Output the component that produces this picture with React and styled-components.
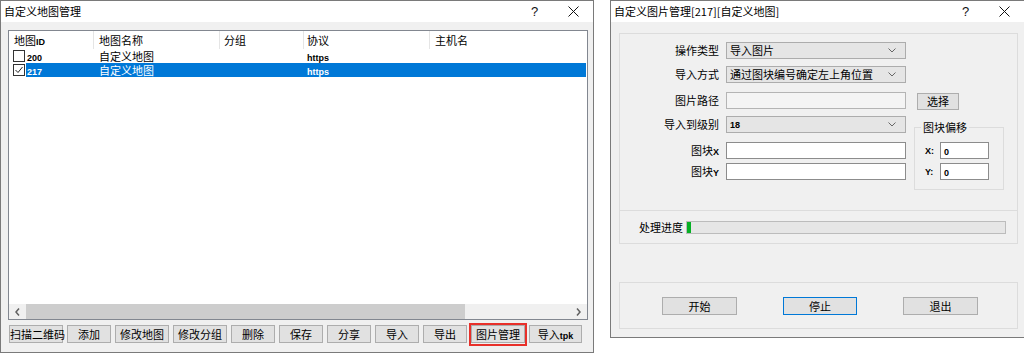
import React from "react";
import styled, { createGlobalStyle } from "styled-components";

const GlobalStyle = createGlobalStyle`
  html, body { margin: 0; padding: 0; background: #fff; }
  body {
    font-family: "Noto Sans CJK SC", "Noto Sans", sans-serif;
    font-size: 11px;
    color: #000;
  }
`;

const Desktop = styled.div`
  display: flex;
  align-items: flex-start;
  gap: 16px;
  width: 1024px;
  height: 354px;
  overflow: hidden;
  background: #fff;
`;

const Window = styled.div`
  flex: none;
  width: ${p => p.$w}px;
  height: ${p => p.$h}px;
  box-sizing: border-box;
  border: 1px solid #7a7a7a;
  background: #f0f0f0;
  display: flex;
  flex-direction: column;
`;

const TitleBar = styled.div`
  height: 21px;
  flex: none;
  background: #fff;
  display: flex;
  align-items: center;
  padding-left: 3px;
`;

const TitleText = styled.div`
  flex: 1;
  font-size: 11px;
  line-height: 21px;
  white-space: nowrap;
`;

const TitleButton = styled.div`
  width: 39px;
  height: 21px;
  display: flex;
  align-items: center;
  justify-content: center;
  font-family: "Liberation Sans", sans-serif;
  font-size: 13px;
  color: #111;
`;

const Latin = styled.span`
  font-family: "Liberation Sans", Arial, sans-serif;
  font-size: 9px;
  font-weight: ${p => (p.$thin ? "normal" : "bold")};
`;

/* ---------- left window ---------- */

const LeftBody = styled.div`
  flex: 1;
  padding: 8px 5px 0 7px;
  display: flex;
  flex-direction: column;
`;

const ListBox = styled.div`
  width: 580px;
  height: 290px;
  box-sizing: border-box;
  border: 1px solid #828790;
  background: #fff;
  display: flex;
  flex-direction: column;
`;

const Header = styled.div`
  height: 18px;
  flex: none;
  display: flex;
`;

const HeadCell = styled.div`
  box-sizing: border-box;
  width: ${p => (p.$w ? `${p.$w}px` : "auto")};
  flex: ${p => (p.$w ? "none" : "1")};
  padding-left: ${p => p.$pl}px;
  border-right: ${p => (p.$w ? "1px solid #e5e5e5" : "none")};
  line-height: 18px;
  white-space: nowrap;
`;

const Row = styled.div`
  height: 14px;
  flex: none;
  display: flex;
`;

const CheckCell = styled.div`
  width: 17px;
  flex: none;
  display: flex;
  align-items: center;
  padding-left: 4px;
  box-sizing: border-box;
`;

const CheckBox = styled.div`
  width: 12px;
  height: 12px;
  box-sizing: border-box;
  border: 1px solid #333;
  background: #fff;
  display: flex;
`;

const Line = styled.div`
  flex: 1;
  margin-right: 1px;
  display: flex;
  background: ${p => (p.$selected ? "#0078d7" : "transparent")};
  color: ${p => (p.$selected ? "#fff" : "#000")};
`;

const Cell = styled.div`
  box-sizing: border-box;
  width: ${p => (p.$w ? `${p.$w}px` : "auto")};
  flex: ${p => (p.$w ? "none" : "1")};
  padding-left: ${p => p.$pl}px;
  line-height: 14px;
  white-space: nowrap;
`;

const Filler = styled.div`
  flex: 1;
`;

const HScroll = styled.div`
  height: 15px;
  flex: none;
  display: flex;
  background: #f0f0f0;
`;

const ScrollArrow = styled.div`
  width: 17px;
  flex: none;
  display: flex;
  align-items: center;
  justify-content: center;
`;

const ScrollThumb = styled.div`
  width: ${p => p.$w}px;
  flex: none;
  background: #cdcdcd;
`;

const ButtonRow = styled.div`
  display: flex;
  gap: 4px;
  margin-top: 5px;
  padding-left: 1px;
`;

const Btn = styled.div`
  position: relative;
  width: ${p => p.$w}px;
  height: ${p => p.$h || 18}px;
  flex: none;
  box-sizing: border-box;
  border: 1px solid ${p => (p.$focus ? "#0078d7" : "#adadad")};
  background: #e1e1e1;
  font-size: 11px;
  line-height: ${p => (p.$h || 18) - 2}px;
  text-align: center;
  white-space: nowrap;
  ${p =>
    p.$marked &&
    `
    &::after {
      content: "";
      position: absolute;
      left: -3px;
      top: -3px;
      right: -3px;
      bottom: -4px;
      border: 2px solid #e8302a;
    }
  `}
`;

/* ---------- right window ---------- */

const RightBody = styled.div`
  flex: 1;
  padding: 11px 0 0 8px;
  display: flex;
  flex-direction: column;
`;

const GroupBox = styled.div`
  width: 399px;
  height: ${p => p.$h}px;
  flex: none;
  box-sizing: border-box;
  border: 1px solid #dcdcdc;
  border-top-width: ${p => (p.$joined ? 0 : 1)}px;
  margin-top: ${p => p.$mt || 0}px;
`;

const FormGrid = styled.div`
  display: grid;
  grid-template-columns: 106px 180px 1fr;
  grid-template-rows: 24px 26px 24px 26px 21px 18px;
  padding-top: 8px;
`;

const Label = styled.div`
  grid-column: 1;
  text-align: right;
  padding-right: 7px;
  line-height: 17px;
  white-space: nowrap;
`;

const Combo = styled.div`
  height: 17px;
  box-sizing: border-box;
  border: 1px solid #acacac;
  background: #e5e5e5;
  display: flex;
  align-items: center;
  padding: 0 9px 0 3px;
`;

const ComboText = styled.div`
  flex: 1;
  line-height: 15px;
  white-space: nowrap;
`;

const Field = styled.div`
  height: 17px;
  box-sizing: border-box;
  border: 1px solid ${p => (p.$disabled ? "#b4b4b4" : "#8c8c8c")};
  background: ${p => (p.$disabled ? "#f4f4f4" : "#fff")};
  width: ${p => (p.$w ? `${p.$w}px` : "auto")};
  padding-left: 3px;
  line-height: 15px;
`;

const SideButton = styled(Btn)`
  margin-left: 11px;
  margin-top: 1px;
`;

const OffsetSet = styled.fieldset`
  grid-column: 3;
  grid-row: 4 / span 3;
  align-self: start;
  margin: 4px 0 0 8px;
  width: 90px;
  height: 70px;
  box-sizing: border-box;
  padding: 0 0 0 10px;
  border: 1px solid #dcdcdc;
  min-width: 0;
`;

const OffsetLegend = styled.legend`
  font-size: 11px;
  line-height: 14px;
  padding: 0 2px;
  margin-left: -4px;
`;

const OffsetRow = styled.div`
  display: flex;
  align-items: center;
  margin-top: ${p => p.$mt}px;
`;

const OffsetLabel = styled(Latin)`
  width: 15px;
`;

const ProgressRow = styled.div`
  height: 100%;
  display: flex;
  align-items: center;
  padding-left: 19px;
`;

const ProgressLabel = styled.div`
  width: 47px;
  white-space: nowrap;
`;

const ProgressBar = styled.div`
  width: 320px;
  height: 13px;
  box-sizing: border-box;
  border: 1px solid #bcbcbc;
  background: #e6e6e6;
  display: flex;
`;

const ProgressChunk = styled.div`
  width: ${p => p.$w}px;
  background: #06b025;
`;

const ActionRow = styled.div`
  height: 100%;
  display: flex;
  align-items: center;
  gap: 46px;
  padding-left: 42px;
`;

/* ---------- icons ---------- */

const CloseIcon = () => (
  <svg width="11" height="11" viewBox="0 0 11 11">
    <path d="M0.5 0.5 L10.5 10.5 M10.5 0.5 L0.5 10.5" stroke="#111" strokeWidth="1" fill="none" />
  </svg>
);

const Check = () => (
  <svg width="10" height="10" viewBox="0 0 10 10">
    <path d="M1.5 5 L4 7.5 L8.5 2" stroke="#222" strokeWidth="1" fill="none" />
  </svg>
);

const Chevron = () => (
  <svg width="8" height="5" viewBox="0 0 8 5">
    <path d="M0.5 0.5 L4 4 L7.5 0.5" stroke="#666" strokeWidth="1" fill="none" />
  </svg>
);

const ArrowGlyph = ({ dir }) => (
  <svg width="5" height="8" viewBox="0 0 5 8">
    <path
      d={dir === "left" ? "M4 0.5 L1 4 L4 7.5" : "M1 0.5 L4 4 L1 7.5"}
      stroke="#606060"
      strokeWidth="1.5"
      fill="none"
    />
  </svg>
);

const Title = ({ children }) => (
  <TitleBar>
    <TitleText>{children}</TitleText>
    <TitleButton>?</TitleButton>
    <TitleButton>
      <CloseIcon />
    </TitleButton>
  </TitleBar>
);

const maps = [
  { id: "200", name: "自定义地图", proto: "https", checked: false, selected: false },
  { id: "217", name: "自定义地图", proto: "https", checked: true, selected: true },
];

const leftButtons = [
  { label: "扫描二维码", w: 54 },
  { label: "添加", w: 44 },
  { label: "修改地图", w: 54 },
  { label: "修改分组", w: 54 },
  { label: "删除", w: 44 },
  { label: "保存", w: 44 },
  { label: "分享", w: 44 },
  { label: "导入", w: 44 },
  { label: "导出", w: 44 },
  { label: "图片管理", w: 54, marked: true },
];

export default function App() {
  return (
    <>
      <GlobalStyle />
      <Desktop>
        <Window $w={594} $h={353}>
          <Title>自定义地图管理</Title>
          <LeftBody>
            <ListBox>
              <Header>
                <HeadCell $w={85} $pl={5}>
                  地图<Latin>ID</Latin>
                </HeadCell>
                <HeadCell $w={126} $pl={5}>地图名称</HeadCell>
                <HeadCell $w={84} $pl={4}>分组</HeadCell>
                <HeadCell $w={126} $pl={3}>协议</HeadCell>
                <HeadCell $pl={5}>主机名</HeadCell>
              </Header>
              {maps.map(m => (
                <Row key={m.id}>
                  <CheckCell>
                    <CheckBox>{m.checked && <Check />}</CheckBox>
                  </CheckCell>
                  <Line $selected={m.selected}>
                    <Cell $w={68} $pl={1}>
                      <Latin>{m.id}</Latin>
                    </Cell>
                    <Cell $w={126} $pl={5}>{m.name}</Cell>
                    <Cell $w={84} $pl={4} />
                    <Cell $w={126} $pl={3}>
                      <Latin>{m.proto}</Latin>
                    </Cell>
                    <Cell $pl={5} />
                  </Line>
                </Row>
              ))}
              <Filler />
              <HScroll>
                <ScrollArrow>
                  <ArrowGlyph dir="left" />
                </ScrollArrow>
                <ScrollThumb $w={439} />
                <Filler />
                <ScrollArrow>
                  <ArrowGlyph dir="right" />
                </ScrollArrow>
              </HScroll>
            </ListBox>
            <ButtonRow>
              {leftButtons.map(b => (
                <Btn key={b.label} $w={b.w} $marked={b.marked}>
                  {b.label}
                </Btn>
              ))}
              <Btn $w={53}>
                导入<Latin>tpk</Latin>
              </Btn>
            </ButtonRow>
          </LeftBody>
        </Window>

        <Window $w={415} $h={338}>
          <Title>自定义图片管理[217][自定义地图]</Title>
          <RightBody>
            <GroupBox $h={178}>
              <FormGrid>
                <Label>操作类型</Label>
                <Combo>
                  <ComboText>导入图片</ComboText>
                  <Chevron />
                </Combo>
                <div />

                <Label>导入方式</Label>
                <Combo>
                  <ComboText>通过图块编号确定左上角位置</ComboText>
                  <Chevron />
                </Combo>
                <div />

                <Label>图片路径</Label>
                <Field $disabled />
                <div>
                  <SideButton $w={42} $h={17}>选择</SideButton>
                </div>

                <Label>导入到级别</Label>
                <Combo>
                  <ComboText>
                    <Latin>18</Latin>
                  </ComboText>
                  <Chevron />
                </Combo>
                <OffsetSet>
                  <OffsetLegend>图块偏移</OffsetLegend>
                  <OffsetRow $mt={8}>
                    <OffsetLabel>X:</OffsetLabel>
                    <Field $w={49}>
                      <Latin>0</Latin>
                    </Field>
                  </OffsetRow>
                  <OffsetRow $mt={4}>
                    <OffsetLabel>Y:</OffsetLabel>
                    <Field $w={49}>
                      <Latin>0</Latin>
                    </Field>
                  </OffsetRow>
                </OffsetSet>

                <Label>
                  图块<Latin>X</Latin>
                </Label>
                <Field />

                <Label>
                  图块<Latin>Y</Latin>
                </Label>
                <Field />
              </FormGrid>
            </GroupBox>
            <GroupBox $h={33} $joined>
              <ProgressRow>
                <ProgressLabel>处理进度</ProgressLabel>
                <ProgressBar>
                  <ProgressChunk $w={4} />
                </ProgressBar>
              </ProgressRow>
            </GroupBox>
            <GroupBox $h={47} $mt={38}>
              <ActionRow>
                <Btn $w={75}>开始</Btn>
                <Btn $w={74} $focus>停止</Btn>
                <Btn $w={75}>退出</Btn>
              </ActionRow>
            </GroupBox>
          </RightBody>
        </Window>
      </Desktop>
    </>
  );
}
